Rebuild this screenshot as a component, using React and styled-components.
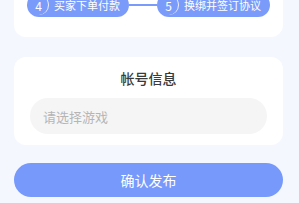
import styled, { createGlobalStyle } from 'styled-components';

const Global = createGlobalStyle`
  html, body {
    margin: 0;
    padding: 0;
    background: #f5f7fe;
    font-family: "Noto Sans CJK SC", "Noto Sans", sans-serif;
    overflow: hidden;
  }
`;

const Page = styled.div`
  display: flex;
  flex-direction: column;
  padding: 0 16px 0 14px;
  width: 299px;
  box-sizing: border-box;
`;

const Card = styled.section`
  background: #ffffff;
  border-radius: 12px;
`;

const StepsCard = styled(Card)`
  margin-top: -20px;
  padding: 13px 13px 20px;
  display: flex;
  align-items: flex-start;
`;

const Step = styled.div`
  display: flex;
  align-items: center;
  height: 24px;
  padding: 0 9px 0 2px;
  border-radius: 12px;
  background: #7b9bfa;
  color: #ffffff;
  font-size: 11px;
  white-space: nowrap;
  flex: ${({ $grow }) => ($grow ? 1 : 'none')};
`;

const StepNum = styled.span`
  width: 20px;
  height: 20px;
  box-sizing: border-box;
  border-radius: 50%;
  border-right: 1px solid rgba(255, 255, 255, 0.85);
  display: flex;
  align-items: center;
  justify-content: center;
  font-size: 12px;
  margin-right: 5px;
`;

const Connector = styled.div`
  width: 30px;
  height: 2px;
  margin-top: 11px;
  background: #7b9bfa;
`;

const InfoCard = styled(Card)`
  margin-top: 20px;
  padding: 10px 16px 11px;
  display: flex;
  flex-direction: column;
  align-items: center;
`;

const Title = styled.h2`
  margin: 0;
  font-size: 14px;
  font-weight: 500;
  color: #3a3a3a;
  line-height: 22px;
`;

const Select = styled.div`
  margin-top: 9px;
  align-self: stretch;
  height: 36px;
  border-radius: 18px;
  background: #f5f5f5;
  display: flex;
  align-items: center;
  padding: 0 13px;
  font-size: 13px;
  color: #b5b5b5;
`;

const Submit = styled.button`
  margin-top: 18px;
  height: 34px;
  border: none;
  border-radius: 17px;
  background: #7699fb;
  color: #ffffff;
  font-family: inherit;
  font-size: 14px;
  font-weight: 400;
`;

export default function App() {
  return (
    <>
      <Global />
      <Page>
        <StepsCard>
          <Step>
            <StepNum>4</StepNum>
            买家下单付款
          </Step>
          <Connector />
          <Step $grow>
            <StepNum>5</StepNum>
            换绑并签订协议
          </Step>
        </StepsCard>
        <InfoCard>
          <Title>帐号信息</Title>
          <Select>请选择游戏</Select>
        </InfoCard>
        <Submit>确认发布</Submit>
      </Page>
    </>
  );
}
